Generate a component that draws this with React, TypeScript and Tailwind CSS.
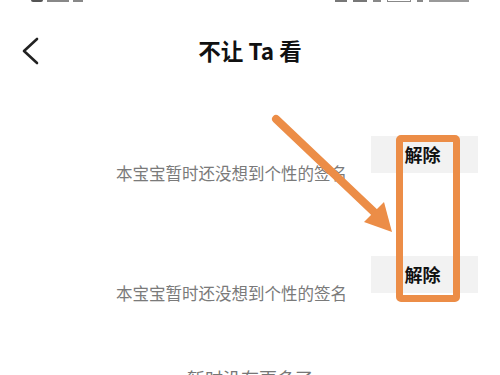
const font = { fontFamily: '"Noto Sans CJK SC", "Noto Sans", sans-serif' };

function Row({ top }: { top: number }) {
  // top: offset of the button inside the 120px row
  return (
    <div className="flex h-[120px] items-start">
      <div className="flex-1 pl-[116px]" style={{ paddingTop: top + 25 }}>
        <span className="text-[16.5px] leading-[22px] text-[#7a7a7a]">本宝宝暂时还没想到个性的签名</span>
      </div>
      <div
        className="mr-[22px] flex h-[37px] w-[107px] items-center justify-center bg-[#f2f2f2]"
        style={{ marginTop: top }}
      >
        <span className="mr-[4px] text-[18px] font-bold text-[#111]">解除</span>
      </div>
    </div>
  );
}

export default function App() {
  return (
    <div className="relative h-[375px] w-[500px] overflow-hidden bg-white" style={font}>
      {/* status bar (cropped at top) */}
      <div className="flex h-[5px] items-start justify-between px-[31px]">
        <div className="flex gap-[4px]">
          <div className="h-[2px] w-[12px] rounded-b bg-[#555]" />
          <div className="h-[2px] w-[22px] bg-[#888]" />
          <div className="h-[2px] w-[10px] bg-[#888]" />
        </div>
        <div className="flex gap-[6px]">
          <div className="h-[2px] w-[12px] bg-[#777]" />
          <div className="h-[2px] w-[14px] bg-[#777]" />
          <div className="h-[2px] w-[8px] bg-[#888]" />
          <div className="h-[2px] w-[24px] border-x border-b border-[#888]" />
          <div className="h-[2px] w-[6px] bg-[#888]" />
          <div className="h-[2px] w-[40px] bg-[#999]" />
        </div>
      </div>

      {/* header */}
      <div className="relative mt-[21px] flex h-[50px] items-center justify-center">
        <svg className="absolute left-[20px] top-[11px]" width="20" height="28" viewBox="0 0 20 28">
          <polyline points="17,2 4,14 17,26" fill="none" stroke="#222" strokeWidth="2.6" strokeLinecap="round" strokeLinejoin="round" />
        </svg>
        <span className="text-[22.5px] font-bold text-[#111]">不让 Ta 看</span>
      </div>

      {/* list */}
      <div className="mt-[14px]">
        <Row top={46} />
        <Row top={46} />
        <div className="pt-[37px] text-center text-[18px] leading-[22px] text-[#777]">暂时没有更多了</div>
      </div>

      {/* annotation box */}
      <div className="absolute left-[396px] top-[135px] h-[167px] w-[64px] rounded-[5px] border-[7px] border-[#ec8d47]" />

      {/* annotation arrow */}
      <svg className="absolute left-0 top-0" width="500" height="375" viewBox="0 0 500 375">
        <line x1="276" y1="119" x2="374" y2="212" stroke="#ec8d47" strokeWidth="8" strokeLinecap="round" />
        <polygon points="392,232 364,222 384,202" fill="#ec8d47" />
      </svg>
    </div>
  );
}
